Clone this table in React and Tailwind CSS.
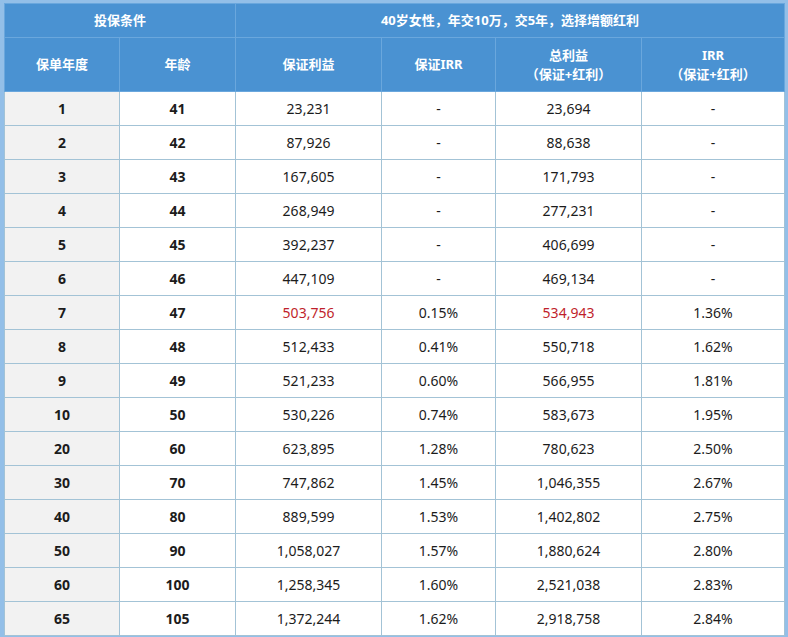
const rows = [
  ["1", "41", "23,231", "-", "23,694", "-"],
  ["2", "42", "87,926", "-", "88,638", "-"],
  ["3", "43", "167,605", "-", "171,793", "-"],
  ["4", "44", "268,949", "-", "277,231", "-"],
  ["5", "45", "392,237", "-", "406,699", "-"],
  ["6", "46", "447,109", "-", "469,134", "-"],
  ["7", "47", "503,756", "0.15%", "534,943", "1.36%", true],
  ["8", "48", "512,433", "0.41%", "550,718", "1.62%"],
  ["9", "49", "521,233", "0.60%", "566,955", "1.81%"],
  ["10", "50", "530,226", "0.74%", "583,673", "1.95%"],
  ["20", "60", "623,895", "1.28%", "780,623", "2.50%"],
  ["30", "70", "747,862", "1.45%", "1,046,355", "2.67%"],
  ["40", "80", "889,599", "1.53%", "1,402,802", "2.75%"],
  ["50", "90", "1,058,027", "1.57%", "1,880,624", "2.80%"],
  ["60", "100", "1,258,345", "1.60%", "2,521,038", "2.83%"],
  ["65", "105", "1,372,244", "1.62%", "2,918,758", "2.84%"],
]

export default function App() {
  return (
    <div
      className="w-[788px] h-[637px] bg-[#93bfe8] pl-[4px] pr-[4px] pt-[3px] overflow-hidden"
      style={{ fontFamily: '"Noto Sans", "Noto Sans CJK SC", sans-serif' }}
    >
      <table className="table-fixed border-collapse w-[780px] text-center">
        <colgroup>
          <col className="w-[115px]" />
          <col className="w-[116px]" />
          <col className="w-[146px]" />
          <col className="w-[114px]" />
          <col className="w-[146px]" />
          <col className="w-[143px]" />
        </colgroup>
        <thead className="bg-[#4a92d2] text-white text-[13px]">
          <tr className="h-[34px]">
            <th colSpan={2} className="border border-[#6aa7dd] font-bold">
              投保条件
            </th>
            <th colSpan={4} className="border border-[#6aa7dd] font-bold">
              40岁女性，年交10万，交5年，选择增额红利
            </th>
          </tr>
          <tr className="h-[54px] leading-[19px]">
            <th className="border border-[#6aa7dd] font-bold">保单年度</th>
            <th className="border border-[#6aa7dd] font-bold">年龄</th>
            <th className="border border-[#6aa7dd] font-bold">保证利益</th>
            <th className="border border-[#6aa7dd] font-bold">保证IRR</th>
            <th className="border border-[#6aa7dd] font-bold">
              总利益
              <br />
              （保证+红利）
            </th>
            <th className="border border-[#6aa7dd] font-bold">
              IRR
              <br />
              （保证+红利）
            </th>
          </tr>
        </thead>
        <tbody className="text-[#1c1c1c] text-[14px]">
          {rows.map((r) => (
            <tr key={r[0]} className="h-[34px]">
              <td className="border border-[#a3c3d6] bg-[#f2f2f2] font-bold">{r[0]}</td>
              <td className="border border-[#a3c3d6] bg-white font-bold">{r[1]}</td>
              <td className={`border border-[#a3c3d6] bg-white ${r[6] ? "text-[#bf1f2c]" : ""}`}>{r[2]}</td>
              <td className="border border-[#a3c3d6] bg-white">{r[3]}</td>
              <td className={`border border-[#a3c3d6] bg-white ${r[6] ? "text-[#bf1f2c]" : ""}`}>{r[4]}</td>
              <td className="border border-[#a3c3d6] bg-white">{r[5]}</td>
            </tr>
          ))}
        </tbody>
      </table>
    </div>
  )
}
